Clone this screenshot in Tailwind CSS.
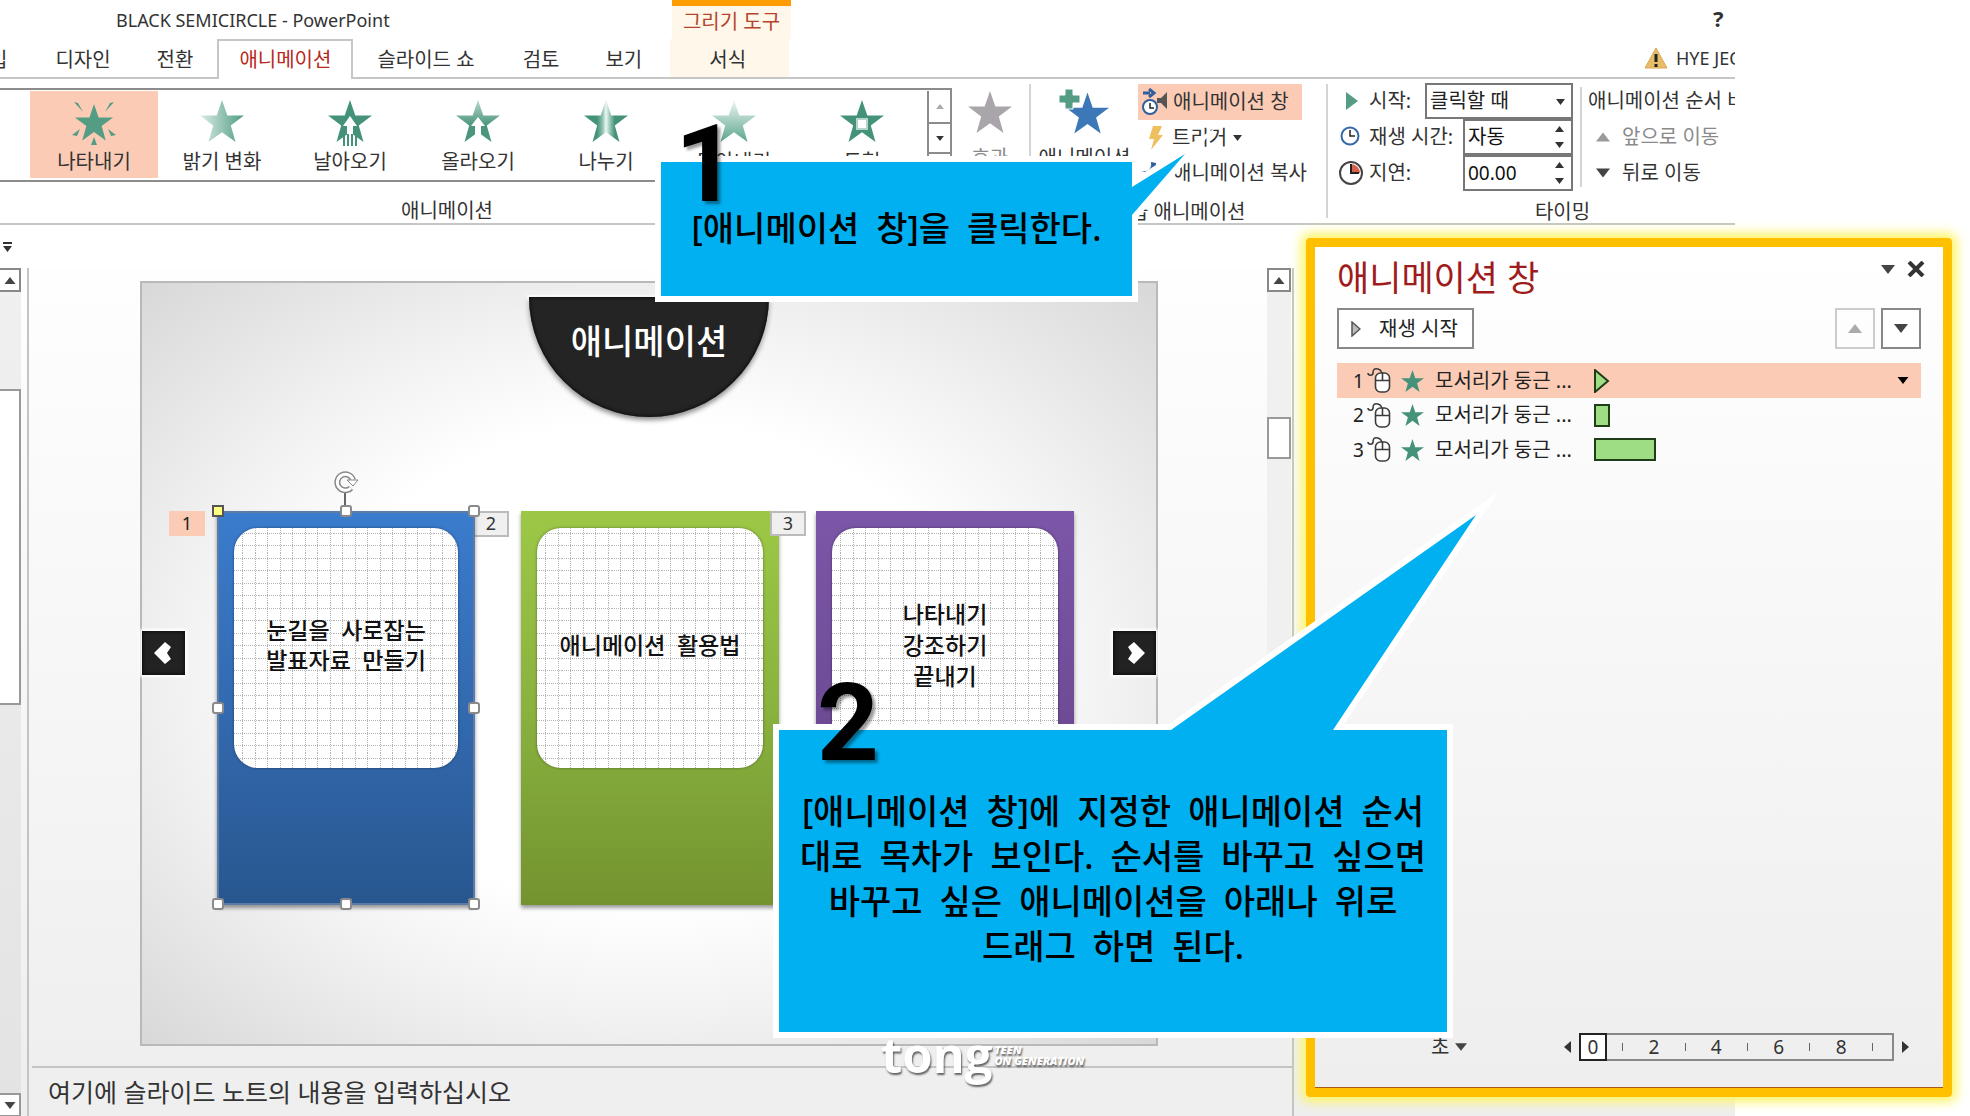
<!DOCTYPE html>
<html lang="ko">
<head>
<meta charset="utf-8">
<title>BLACK SEMICIRCLE - PowerPoint</title>
<script src="https://cdn.jsdelivr.net/npm/@tailwindcss/browser@4"></script>
</head>
<body class="relative flex min-h-screen flex-col overflow-x-hidden bg-white font-['Noto_Sans','Noto_Sans_CJK_KR',sans-serif] text-[20px] leading-6 text-[#333]">

<!-- Shared shapes -->
<svg class="absolute h-0 w-0" aria-hidden="true">
  <defs>
    <symbol id="star" viewBox="0 0 44 42"><path d="M22 0l5.3 15.5H44L30.800 25.500 35.500 42 22 32.200 8.500 42 13.200 25.500 0 15.500h16.700z"/></symbol>
    <symbol id="up" viewBox="0 0 14 9"><path d="M7 0l7 9H0z"/></symbol>
    <symbol id="down" viewBox="0 0 14 9"><path d="M0 0h14L7 9z"/></symbol>
    <symbol id="mouse" viewBox="0 0 24 27"><g fill="#fff" stroke="#3c3c3c" stroke-width="1.600"><path fill="none" d="M1 6c0 3 5 3 5 0s1-5 5-4 3 3 4 4"/><rect x="8.500" y="6" width="14" height="19" rx="5"/><path fill="none" d="M8.500 13.500h14M15.500 6v7.500"/></g></symbol>
    <pattern id="grid" width="25" height="25" patternUnits="userSpaceOnUse"><path d="M0 5.500h25M0 17.500h25M8.500 0v25M21.500 0v25" stroke="#b4b4b4" stroke-dasharray="1 1" fill="none"/></pattern>
    <linearGradient id="fade" x1="0" x2="1"><stop offset="0" stop-color="#dcece6"/><stop offset="1" stop-color="#4f9c82"/></linearGradient>
    <linearGradient id="rise" x1="0" y1="0" x2="0" y2="1"><stop offset="0" stop-color="#b9d8cc"/><stop offset=".6" stop-color="#4a967c"/></linearGradient>
    <linearGradient id="wipe" x1="0" y1="0" x2="0" y2="1"><stop offset="0" stop-color="#eef6f3"/><stop offset="1" stop-color="#5ba58c"/></linearGradient>
    <linearGradient id="split" x1="0" x2="1"><stop offset=".3" stop-color="#45927a"/><stop offset=".42" stop-color="#8fc2b0"/><stop offset=".5" stop-color="#eef7f3"/><stop offset=".6" stop-color="#8fc2b0"/><stop offset=".7" stop-color="#45927a"/></linearGradient>
  </defs>
</svg>

<div class="mr-[235px] overflow-hidden">
  <!-- Title bar -->
  <header class="flex h-[39px] whitespace-nowrap">
    <h1 class="w-[672px] shrink-0 pt-2 pl-[116px] text-[18px]">BLACK SEMICIRCLE - PowerPoint</h1>
    <div class="w-[119px] shrink-0 border-t-6 border-[#ff9c00] bg-[#fff7ea] pt-1 text-center text-[#b5442a]">그리기 도구</div>
    <button class="ml-auto w-[22px] pb-1 text-left text-[22px] font-bold" aria-label="도움말">?</button>
  </header>

  <!-- Tabs -->
  <nav class="flex h-[40px] whitespace-nowrap shadow-[inset_0_-2px_0_#c6c6c6]">
    <a href="#" class="-ml-[35px] px-6 pt-[9px]">입</a>
    <a href="#" class="px-6 pt-[9px]">디자인</a>
    <a href="#" class="pt-[9px] pr-6 pl-[22px]">전환</a>
    <a href="#" class="border-x-2 border-t-2 border-[#c6c6c6] bg-white px-5 pt-[7px] text-[#b8281c]">애니메이션</a>
    <a href="#" class="px-6 pt-[9px]">슬라이드 쇼</a>
    <a href="#" class="px-6 pt-[9px]">검토</a>
    <a href="#" class="pt-[9px] pr-7 pl-[22px]">보기</a>
    <a href="#" class="mb-[2px] w-[119px] bg-[#fff7ea] pt-[9px] pr-1 text-center">서식</a>
    <a href="#" class="ml-auto flex w-[91px] gap-2 pt-[7px]">
      <svg class="mt-px h-[22px] w-6 shrink-0" viewBox="0 0 24 22"><path d="M12 1l11 20H1z" fill="#e8bd69" stroke="#d9a850"/><path d="M12 7v8M12 17v3" stroke="#222" stroke-width="3"/></svg>
      <span class="text-[18px]">HYE JEONG</span>
    </a>
  </nav>

  <!-- Ribbon -->
  <div class="flex h-[146px] border-b-2 border-[#c6c6c6] whitespace-nowrap">
    <section class="flex w-[1029px] shrink-0 flex-col">
      <div class="flex h-[112px]">
        <div class="mt-[9px] flex h-[94px] w-[952px] border-y-2 border-r-2 border-[#8c8c8c] pt-px pl-[30px]">
          <button class="flex h-[87px] w-32 flex-col items-center bg-[#fbcbb5] pt-[9px]">
            <svg class="h-[46px] w-[46px]" viewBox="0 0 46 46" fill="#559c84"><use href="#star" x="1" y="1" width="44" height="42" stroke="#fbcbb5" stroke-width="2"/><path d="M3 2l4 1 5 9zM43 2l-4 1-5 9zM1 35l8-6-3 7zM45 35l-8-6 3 7zM23 37l3 8h-6z"/></svg>
            <span class="mt-1">나타내기</span></button>
          <button class="flex h-[87px] w-32 flex-col items-center pt-[9px]"><svg class="h-[46px] w-[44px]" fill="url(#fade)"><use href="#star" height="42"/></svg><span class="mt-1">밝기 변화</span></button>
          <button class="flex h-[87px] w-32 flex-col items-center pt-[9px]"><svg class="h-[46px] w-[44px]" viewBox="0 0 44 46" fill="#45927a"><use href="#star" height="42"/><path d="M22 16l7 10h-4v10h-6V26h-4z" fill="#fff"/><path d="M16 36v10M20 34v12M24 34v12M28 36v10" stroke="#45927a" stroke-width="2"/></svg><span class="mt-1">날아오기</span></button>
          <button class="flex h-[87px] w-32 flex-col items-center pt-[9px]"><svg class="h-[46px] w-[44px]" viewBox="0 0 44 46" fill="url(#rise)"><use href="#star" height="42"/><path d="M22 17l7 9h-4v10h-6V26h-4z" fill="#fff"/></svg><span class="mt-1">올라오기</span></button>
          <button class="flex h-[87px] w-32 flex-col items-center pt-[9px]"><svg class="h-[46px] w-[44px]" fill="url(#split)"><use href="#star" height="42"/></svg><span class="mt-1">나누기</span></button>
          <button class="flex h-[87px] w-32 flex-col items-center pt-[9px]"><svg class="h-[46px] w-[44px]" fill="url(#wipe)"><use href="#star" height="42"/></svg><span class="mt-1">닦아내기</span></button>
          <button class="flex h-[87px] w-32 flex-col items-center pt-[9px]"><svg class="h-[46px] w-[44px]" fill="#45927a"><use href="#star" height="42"/><rect x="17" y="19" width="10" height="10" fill="#fff" stroke="#b5d6ca" stroke-width="2"/></svg><span class="mt-1">도형</span></button>
          <div class="ml-auto flex w-[23px] flex-col border-l-2 border-[#8c8c8c]">
            <button class="grid h-[31px] place-items-center" aria-label="위로"><svg class="h-[5px] w-2" fill="#aaa"><use href="#up"/></svg></button>
            <button class="grid h-[32px] place-items-center border-y-2 border-[#8c8c8c]" aria-label="아래로"><svg class="h-[5px] w-2" fill="#333"><use href="#down"/></svg></button>
            <button class="grow" aria-label="자세히"></button>
          </div>
        </div>
        <button class="flex w-[76px] flex-col items-center pt-[12px] text-[#8a8a8a]"><svg class="h-[43px] w-[44px]" fill="#a9a5aa"><use href="#star" height="42"/></svg><span class="mt-3">효과</span></button>
      </div>
      <h2 class="mt-[9px] pr-[135px] text-center">애니메이션</h2>
    </section>

    <section class="my-[5px] flex w-[299px] shrink-0 flex-col border-x-2 border-[#d4d4d4]">
      <div class="flex h-[107px]">
        <button class="flex w-[107px] shrink-0 flex-col items-center pt-[5px]">
          <svg class="h-[45px] w-[52px]" viewBox="0 0 52 45"><use href="#star" x="7" y="3" width="43" height="42" fill="#3c78b8"/><path d="M6 0h8v6h7v8h-7v6H6v-6H0V6h6z" fill="#559c84" stroke="#fff"/></svg>
          <span class="mt-3">애니메이션</span></button>
        <div class="flex flex-col items-start">
          <button class="flex h-9 w-[164px] items-center gap-[3px] bg-[#fbcbb5] pl-1">
            <svg class="h-7 w-7 shrink-0" viewBox="0 0 28 28"><circle cx="8" cy="19" r="7" fill="#fff" stroke="#2f5f9c" stroke-width="2"/><path d="M8 15v5h4" fill="none" stroke="#222" stroke-width="1.500"/><path d="M1 5h7M7 1l5 4-5 4" fill="none" stroke="#2f5f9c" stroke-width="3"/><path d="M15 10h4l6-6v17l-6-6h-4z" fill="#555"/></svg>애니메이션 창</button>
          <button class="flex h-9 items-center gap-2 pl-[10px]"><svg class="h-6 w-4 shrink-0" viewBox="0 0 16 24"><path d="M5 0h9l-4 9h5L3 24l3-11H1z" fill="#efc05f"/></svg>트리거<svg class="h-[6px] w-[9px] -ml-0.5" fill="#333"><use href="#down"/></svg></button>
          <button class="flex h-9 items-center gap-[15px] pl-1"><svg class="mb-3 h-4 w-4 shrink-0" viewBox="0 0 16 16"><path d="M0 12c7 1 10-3 9-9l5 1c0 7-4 12-14 8z" fill="#2f5f9c"/></svg>애니메이션 복사</button>
        </div>
      </div>
      <h2 class="mt-[9px] text-center">고급 애니메이션</h2>
    </section>

    <section class="flex w-[470px] shrink-0 flex-col pt-[4px] pl-[11px]">
      <div class="flex h-[108px]">
        <div class="w-[234px] shrink-0">
          <div class="flex h-9 items-center">
            <svg class="w-6" viewBox="0 0 24 24"><path d="M7 3l12 9-12 9z" fill="#559c84"/></svg><label for="start" class="ml-1.5">시작:</label>
            <div class="relative ml-auto h-9 w-[148px]">
              <select id="start" class="h-full w-full appearance-none rounded-none border-2 border-[#777] bg-white pl-[3px] text-[#222]"><option>클릭할 때</option></select>
              <svg class="pointer-events-none absolute top-4 right-2 h-[6px] w-[9px]" fill="#333"><use href="#down"/></svg>
            </div>
          </div>
          <div class="flex h-9 items-center">
            <svg class="w-6" viewBox="0 0 24 24" fill="none"><circle cx="11" cy="11" r="8.500" stroke="#3568a8" stroke-width="2"/><path d="M11 5v6h5" stroke="#222" stroke-width="1.500"/></svg><label for="dur" class="ml-1.5">재생 시간:</label>
            <div class="ml-auto flex h-9 w-[110px] border-2 border-[#777]">
              <input id="dur" value="자동" class="w-20 bg-transparent pl-[3px] text-[#111]">
              <span class="ml-auto flex w-6 flex-col items-center justify-around"><svg class="h-[6px] w-[9px]" fill="#333"><use href="#up"/></svg><svg class="h-[6px] w-[9px]" fill="#333"><use href="#down"/></svg></span>
            </div>
          </div>
          <div class="flex h-9 items-center">
            <svg class="w-6" viewBox="0 0 24 24" fill="none"><circle cx="12" cy="12" r="11" stroke="#444" stroke-width="2" fill="#fff"/><path d="M12 3a9 9 0 0 1 9 9h-9z" fill="#d9604a"/><path d="M12 3v9h8" stroke="#222" stroke-width="2"/></svg><label for="delay" class="ml-1.5">지연:</label>
            <div class="ml-auto flex h-9 w-[110px] border-2 border-[#777]">
              <input id="delay" value="00.00" class="w-20 bg-transparent pl-[3px] text-[19px] text-[#111]">
              <span class="ml-auto flex w-6 flex-col items-center justify-around"><svg class="h-[6px] w-[9px]" fill="#333"><use href="#up"/></svg><svg class="h-[6px] w-[9px]" fill="#333"><use href="#down"/></svg></span>
            </div>
          </div>
        </div>
        <div class="my-1 ml-[7px] border-l-2 border-[#d4d4d4] pl-[6px]">
          <h3 class="h-8 leading-7">애니메이션 순서 바꾸기</h3>
          <button class="flex h-9 items-center gap-3 pl-2 text-[#8a8a8a]"><svg class="h-[10px] w-[14px]" fill="#9a9a9a"><use href="#up"/></svg>앞으로 이동</button>
          <button class="flex h-9 items-center gap-3 pl-2"><svg class="h-[10px] w-[14px]" fill="#444"><use href="#down"/></svg>뒤로 이동</button>
        </div>
      </div>
      <h2 class="mt-[9px] pr-3 text-center">타이밍</h2>
    </section>
  </div>
</div>

<main class="flex grow bg-linear-to-b from-white to-[#eeeeee] bg-[size:calc(100%-235px)_100%] bg-no-repeat">
  <div class="flex min-w-0 grow flex-col">
    <div class="h-[43px] bg-white pt-[17px] pl-[3px]"><svg class="h-[10px] w-[9px]" fill="#333"><path d="M0 0h9v2H0zM0 4h9L4.500 10z"/></svg></div>
    <div class="flex grow">
      <!-- Thumbnail list scrollbar -->
      <div class="flex w-[21px] flex-col bg-linear-to-b from-[#f0f0f0] to-[#e3e3e3]">
        <button class="grid h-6 place-items-center border-2 border-l-0 border-[#888] bg-white" aria-label="위로"><svg class="h-[7px] w-3" fill="#444"><use href="#up"/></svg></button>
        <div class="mt-[97px] h-[316px] border-2 border-l-0 border-[#999] bg-white"></div>
        <button class="mt-auto grid h-6 place-items-center border-2 border-l-0 border-[#999] bg-white" aria-label="아래로"><svg class="h-[7px] w-3" fill="#444"><use href="#down"/></svg></button>
      </div>
      <div class="ml-1.5 flex min-w-0 grow flex-col border-x-2 border-[#c4c4c4]">
        <div class="flex grow">
          <div class="flex min-w-0 grow justify-center pt-[13px] pb-5 pl-[2px]">
            <!-- Slide -->
            <div class="relative h-[765px] w-[1018px] shrink-0 border-2 border-[#b9b9b9] bg-[radial-gradient(ellipse_at_center,#fff_45%,#f2f2f2_65%,#d8d8d8_100%)]">
              <div class="absolute top-[14px] left-[387px] grid h-[120px] w-[240px] place-items-center rounded-b-[120px] bg-[#242424] pb-8 shadow-[0_3px_5px_#0007,0_0_2px_2px_#fff,inset_0_0_4px_#000]"><span class="text-[34px] leading-10 font-medium text-white">애니메이션</span></div>

              <span class="absolute top-[228px] left-[27px] h-[25px] w-9 bg-[#fbcbb5] text-center text-[18px] text-[#222]">1</span>
              <span class="absolute top-[228px] left-[331px] h-[26px] w-9 border-2 border-[#bbb] bg-[#f0f0f0] text-center text-[18px] leading-[20px]">2</span>

              <article class="absolute top-[228px] left-[75px] h-[394px] w-[258px] border-2 border-[#5c7ba6] bg-linear-to-b from-[#3a7ccd] via-[#336ab0] to-[#28578f] px-[15px] pt-[15px] shadow-[0_3px_4px_#0006]">
                <div class="relative grid h-[240px] content-center overflow-hidden rounded-3xl bg-white pb-1.5 text-center text-[23px] leading-[30px] font-medium text-[#111] shadow-[0_0_3px_#0006]"><svg class="absolute inset-0 h-full w-full" aria-hidden="true"><rect width="100%" height="100%" fill="url(#grid)"/></svg><span class="relative">눈길을&ensp;사로잡는</span><span class="relative">발표자료&ensp;만들기</span></div>
              </article>
              <article class="absolute top-[228px] left-[379px] h-[394px] w-[258px] bg-linear-to-b from-[#9cc846] via-[#8ab23f] to-[#73932f] px-4 pt-[17px] shadow-[0_3px_4px_#0006]">
                <div class="relative grid h-[240px] content-center overflow-hidden rounded-3xl bg-white pb-1.5 text-center text-[23px] leading-[30px] font-medium text-[#111] shadow-[0_0_3px_#0006]"><svg class="absolute inset-0 h-full w-full" aria-hidden="true"><rect width="100%" height="100%" fill="url(#grid)"/></svg><span class="relative">애니메이션&ensp;활용법</span></div>
              </article>
              <article class="absolute top-[228px] left-[674px] h-[394px] w-[258px] bg-linear-to-b from-[#7c56a8] via-[#6f4c96] to-[#573a78] px-4 pt-[17px] shadow-[0_3px_4px_#0006]">
                <div class="relative grid h-[240px] content-center overflow-hidden rounded-3xl bg-white pb-1.5 text-center text-[23px] leading-[31px] font-medium text-[#111] shadow-[0_0_3px_#0006]"><svg class="absolute inset-0 h-full w-full" aria-hidden="true"><rect width="100%" height="100%" fill="url(#grid)"/></svg><span class="relative">나타내기</span><span class="relative">강조하기</span><span class="relative">끝내기</span></div>
              </article>
              <span class="absolute top-[228px] left-[628px] h-[25px] w-9 border-2 border-[#bbb] bg-[#f0f0f0] text-center text-[18px] leading-[20px]">3</span>

              <!-- Selection frame -->
              <svg class="absolute top-[187px] left-[68px] h-[442px] w-[272px]" viewBox="0 0 272 442" fill="none">
                <path d="M135 20v16" stroke="#666" stroke-width="2"/>
                <path d="M141 18A8 8 0 1 1 143 10" stroke="#888" stroke-width="6"/><path d="M141 18A8 8 0 1 1 143 10" stroke="#fff" stroke-width="3"/><path d="M137 10h11l-5 6z" fill="#fff" stroke="#888"/>
                <g fill="#fff" stroke="#8a8a8a" stroke-width="2"><rect x="3" y="36" width="10" height="10" fill="#ffff80" stroke="#555"/><rect x="131" y="36" width="10" height="10" rx="2"/><rect x="259" y="36" width="10" height="10" rx="2"/><rect x="3" y="233" width="10" height="10" rx="2"/><rect x="259" y="233" width="10" height="10" rx="2"/><rect x="3" y="429" width="10" height="10" rx="2"/><rect x="131" y="429" width="10" height="10" rx="2"/><rect x="259" y="429" width="10" height="10" rx="2"/></g>
              </svg>

              <button class="absolute top-[348px] left-0 grid h-[44px] w-[43px] place-items-center bg-[#222] pr-1 shadow-[0_0_3px_2px_#fff,inset_0_0_4px_#000]" aria-label="이전"><svg class="h-6 w-[18px]" viewBox="0 0 18 24"><path d="M12 1l6 5-4 6 4 6-6 5L1 12z" fill="#fff"/></svg></button>
              <button class="absolute top-[348px] right-0 grid h-[44px] w-[43px] place-items-center bg-[#222] pl-1 shadow-[0_0_3px_2px_#fff,inset_0_0_4px_#000]" aria-label="다음"><svg class="h-6 w-[18px]" viewBox="0 0 18 24"><path d="M6 1L0 6l4 6-4 6 6 5L17 12z" fill="#fff"/></svg></button>
            </div>
          </div>
          <!-- Slide scrollbar -->
          <div class="mr-px mb-12 flex w-6 shrink-0 flex-col bg-[#f0f0f0]">
            <button class="grid h-6 place-items-center border-2 border-[#888] bg-white" aria-label="위로"><svg class="h-[7px] w-3" fill="#444"><use href="#up"/></svg></button>
            <div class="mt-[125px] h-[42px] border-2 border-[#999] bg-white"></div>
          </div>
        </div>
        <div class="ml-[3px] h-[51px] border-t-2 border-[#c4c4c4] bg-[#efefef] pt-[10px] pl-4 text-[25px] leading-7">여기에 슬라이드 노트의 내용을 입력하십시오</div>
      </div>
    </div>
  </div>

  <!-- Animation pane -->
  <aside class="mt-[13px] mr-[18px] mb-5 ml-3 flex w-[646px] shrink-0 flex-col rounded-[4px] border-9 border-[#ffc000] bg-linear-to-b from-white to-[#eeeeee] px-[22px] shadow-[0_0_11px_5px_#fff566]">
    <div class="flex items-start pt-[11px]">
      <h2 class="text-[35px] leading-10 text-[#a01c1c]">애니메이션 창</h2>
      <button class="mt-[7px] ml-auto" aria-label="옵션"><svg class="h-[9px] w-[14px]" fill="#444"><use href="#down"/></svg></button>
      <button class="mt-[3px] mr-[-4px] ml-3" aria-label="닫기"><svg class="h-4 w-[18px]" viewBox="0 0 18 16"><path d="M2 1l14 14M16 1L2 15" stroke="#333" stroke-width="4"/></svg></button>
    </div>
    <div class="mt-[10px] flex gap-1.5">
      <button class="mr-auto flex h-[41px] w-[137px] items-center gap-[18px] border-2 border-[#888] bg-white pl-3 whitespace-nowrap text-[#222]"><svg class="h-4 w-[10px] shrink-0"><path d="M1 1l8 7-8 7z" fill="#bbb" stroke="#555" stroke-width="1.500"/></svg>재생 시작</button>
      <button class="grid h-[41px] w-10 place-items-center border-2 border-[#ccc]" aria-label="위로 이동"><svg class="h-[9px] w-[14px]" fill="#aaa"><use href="#up"/></svg></button>
      <button class="grid h-[41px] w-10 place-items-center border-2 border-[#888] bg-white" aria-label="아래로 이동"><svg class="h-[9px] w-[14px]" fill="#444"><use href="#down"/></svg></button>
    </div>
    <ol class="mt-3.5 text-[#222]">
      <li class="flex h-[35px] items-center bg-[#fbcbb5] pl-4"><span class="w-[14px] text-[19px]">1</span><svg class="h-[27px] w-6"><use href="#mouse"/></svg><svg class="mr-[11px] ml-2.5 h-[22px] w-[23px]" fill="#45927a"><use href="#star"/></svg><span class="w-[159px]">모서리가 둥근 ...</span><svg class="h-6 w-4"><path d="M1 1l13 11L1 23z" fill="#9fdd85" stroke="#1f3d16" stroke-width="2"/></svg><svg class="mr-3 ml-auto h-[7px] w-3" fill="#000"><use href="#down"/></svg></li>
      <li class="flex h-[34px] items-center pl-4"><span class="w-[14px] text-[19px]">2</span><svg class="h-[27px] w-6"><use href="#mouse"/></svg><svg class="mr-[11px] ml-2.5 h-[22px] w-[23px]" fill="#45927a"><use href="#star"/></svg><span class="w-[159px]">모서리가 둥근 ...</span><span class="h-[23px] w-4 border-2 border-[#1f3d16] bg-[#9fdd85]"></span></li>
      <li class="flex h-[35px] items-center pl-4"><span class="w-[14px] text-[19px]">3</span><svg class="h-[27px] w-6"><use href="#mouse"/></svg><svg class="mr-[11px] ml-2.5 h-[22px] w-[23px]" fill="#45927a"><use href="#star"/></svg><span class="w-[159px]">모서리가 둥근 ...</span><span class="h-[23px] w-[62px] border-2 border-[#1f3d16] bg-[#9fdd85]"></span></li>
    </ol>
    <div class="mt-auto mb-[26px] flex items-center pl-[94px]">
      <button class="flex items-center gap-1.5">초<svg class="h-2 w-3" fill="#444"><use href="#down"/></svg></button>
      <svg class="ml-auto h-3 w-[7px]"><path d="M7 0v12L0 6z" fill="#333"/></svg>
      <div class="mx-2 flex h-7 w-[315px] items-center border-2 border-[#888] text-[19px]">
        <span class="-my-0.5 -ml-0.5 grid h-7 w-7 place-items-center border-2 border-[#222] bg-white">0</span>
        <span class="grid grow grid-cols-9 pr-1 text-center"><i class="mx-auto h-2 w-px self-center bg-[#666]"></i><b class="font-normal">2</b><i class="mx-auto h-2 w-px self-center bg-[#666]"></i><b class="font-normal">4</b><i class="mx-auto h-2 w-px self-center bg-[#666]"></i><b class="font-normal">6</b><i class="mx-auto h-2 w-px self-center bg-[#666]"></i><b class="font-normal">8</b><i class="mx-auto h-2 w-px self-center bg-[#666]"></i></span>
      </div>
      <svg class="mr-3 h-3 w-[7px]"><path d="M0 0v12l7-6z" fill="#333"/></svg>
    </div>
    <div class="-mx-[22px] h-px bg-[#a65a1c]"></div>
  </aside>
</main>

<!-- Watermark -->
<div class="absolute top-[1029px] left-[881px] flex text-white [text-shadow:1px_2px_2px_#0009]">
  <span class="font-['Open_Sans',sans-serif] text-[49px] leading-[50px] font-bold">tong</span>
  <span class="ml-0.5 pt-[15px] font-['Open_Sans',sans-serif] text-[11px] leading-[11px] font-extrabold italic">TEEN<br>ON GENERATION</span>
</div>

<!-- Step 1 callout -->
<section class="absolute top-[120px] left-[655px] h-[182px] w-[570px]">
  <svg class="absolute inset-0 h-full w-full" viewBox="0 0 570 182"><path d="M6 42H477V67L530 34 477 95V176H6z" fill="#00b0f0" stroke="#fff" stroke-width="12" stroke-miterlimit="10" paint-order="stroke"/></svg>
  <b class="absolute -top-[10px] left-[20px] font-['Roboto',sans-serif] text-[108px] leading-[108px] text-black [text-shadow:3px_3px_3px_#0006]">1</b>
  <p class="absolute top-[88px] left-[6px] w-[471px] text-center text-[34px] leading-10 font-medium text-black">[애니메이션&ensp;창]을&ensp;클릭한다.</p>
</section>

<!-- Step 2 callout -->
<section class="absolute top-[480px] left-[773px] h-[558px] w-[740px]">
  <svg class="absolute inset-0 h-full w-full" viewBox="0 0 740 558"><path d="M6 250H398L703 35 560 250H674V552H6z" fill="#00b0f0" stroke="#fff" stroke-width="12" stroke-miterlimit="10" paint-order="stroke"/></svg>
  <b class="absolute top-[189px] left-[44px] font-['Roboto',sans-serif] text-[108px] leading-[108px] text-black [text-shadow:3px_3px_3px_#0006]">2</b>
  <p class="absolute top-[309px] left-[6px] w-[668px] text-center text-[34px] leading-[45px] font-medium whitespace-nowrap text-black">[애니메이션&ensp;창]에&ensp;지정한&ensp;애니메이션&ensp;순서<br>대로&ensp;목차가&ensp;보인다.&ensp;순서를&ensp;바꾸고&ensp;싶으면<br>바꾸고&ensp;싶은&ensp;애니메이션을&ensp;아래나&ensp;위로<br>드래그&ensp;하면&ensp;된다.</p>
</section>
</body>
</html>
